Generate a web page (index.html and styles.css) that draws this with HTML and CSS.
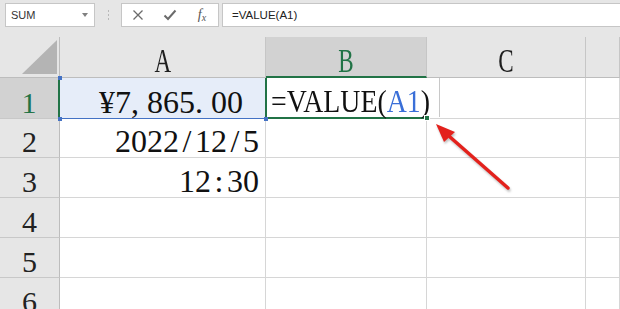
FILE: index.html
```html
<!DOCTYPE html>
<html>
<head>
<meta charset="utf-8">
<title>VALUE</title>
<link rel="stylesheet" href="styles.css">
</head>
<body>
<div class="bar">
	<div class="namebox">SUM<span class="caret"></span></div>
	<div class="grip"><i></i><i></i><i></i></div>
	<div class="fbtns">
		<span class="fb"><svg width="12" height="12" viewBox="0 0 12 12"><path d="M1.5 1.5L10.5 10.5M10.5 1.5L1.5 10.5" stroke="#6b6b6b" stroke-width="1.3" fill="none"/></svg></span>
		<span class="fb"><svg width="14" height="12" viewBox="0 0 14 12"><path d="M1.5 6.5L5 10L12.5 1.5" stroke="#6b6b6b" stroke-width="2" fill="none"/></svg></span>
		<span class="fb fx"><i>f</i><i class="sub">x</i></span>
	</div>
	<div class="finput">=VALUE(A1)</div>
</div>
<div class="sheet">
	<div class="corner"><svg width="59" height="40" viewBox="0 0 59 40"><polygon points="22,37 57,3 57,37" fill="#b4b4b4"/></svg></div>
	<div class="ch"><span>A</span></div>
	<div class="ch sel"><span>B</span></div>
	<div class="ch"><span>C</span></div>
	<div class="ch"></div>

	<div class="rh sel">1</div>
	<div class="c num a1"><span class="dot tl"></span><span class="dot bl"></span><span class="dot br"></span>¥7<span class="pu">,</span>865<span class="pu">.</span>00</div>
	<div class="c b1">
		<div class="edit"><span class="f">=VALUE(<span class="ref">A1</span>)</span></div>
		<span class="handle"></span>
	</div>
	<div class="c"></div>
	<div class="c"></div>

	<div class="rh">2</div>
	<div class="c num">2022<span class="sl">/</span>12<span class="sl">/</span>5</div>
	<div class="c"></div>
	<div class="c"></div>
	<div class="c"></div>

	<div class="rh">3</div>
	<div class="c num">12<span class="sl">:</span>30</div>
	<div class="c"></div>
	<div class="c"></div>
	<div class="c"></div>

	<div class="rh">4</div>
	<div class="c"></div>
	<div class="c"></div>
	<div class="c"></div>
	<div class="c"></div>

	<div class="rh">5</div>
	<div class="c"></div>
	<div class="c"></div>
	<div class="c"></div>
	<div class="c"></div>

	<div class="rh">6</div>
	<div class="c"></div>
	<div class="c"></div>
	<div class="c"></div>
	<div class="c"></div>
</div>
<svg class="arrow" width="620" height="309" viewBox="0 0 620 309">
	<line x1="508" y1="188" x2="450" y2="137" stroke="#e3211c" stroke-width="3.5" stroke-linecap="round"/>
	<polygon points="436,124 455,132 444,142" fill="#e3211c"/>
</svg>
</body>
</html>
```
FILE: styles.css
```css
*{ box-sizing:border-box; }
body{ margin:0; width:620px; height:309px; overflow:hidden; background:#fff; position:relative; }

/* toolbar */
.bar{ height:37px; background:#e6e6e6; display:flex; align-items:flex-start; padding:3px 0 0 5px; font-family:"Liberation Sans", Arial, sans-serif; }
.namebox{ position:relative; width:90px; height:24px; background:#fff; border:1px solid #c6c6c6; padding-left:5px; font-size:11px; line-height:22px; color:#333; }
.caret{ position:absolute; right:6px; top:9px; width:0; height:0; border-left:3px solid transparent; border-right:3px solid transparent; border-top:4px solid #808080; }
.grip{ width:26px; height:24px; display:flex; flex-direction:column; align-items:center; justify-content:center; gap:2px; }
.grip i{ display:block; width:1px; height:2px; background:#b8b8b8; }
.fbtns{ width:98px; height:24px; background:#fff; border:1px solid #c6c6c6; display:flex; }
.fb{ width:32px; height:22px; display:flex; align-items:center; justify-content:center; }
.fx{ font-family:"Liberation Serif", serif; color:#555; font-size:14px; }
.fx .sub{ font-size:10px; position:relative; top:2px; }
.finput{ flex:1; margin-left:3px; margin-right:-4px; height:24px; background:#fff; border:1px solid #c6c6c6; padding-left:9px; font-size:11.5px; line-height:22px; color:#222; }

/* grid */
.sheet{ display:grid; grid-template-columns:60px 206px 161px 159px 34px; grid-template-rows:41px 41px 39px 40px 40px 40px 40px; font-family:"Liberation Serif", "Times New Roman", serif; }
.corner{ background:#e6e6e6; border-right:1px solid #bdbdbd; border-bottom:1px solid #bdbdbd; }
.corner svg{ display:block; }
.ch{ background:#e6e6e6; border-right:1px solid #c6c6c6; border-bottom:1px solid #bdbdbd; display:flex; justify-content:center; align-items:flex-end; font-size:33px; line-height:32px; color:#1e1e1e; }
.ch span{ display:inline-block; transform:scaleX(.7); }
.ch.sel{ background:#d2d2d2; color:#217346; border-bottom:2px solid #217346; line-height:30px; }
.rh{ background:#e6e6e6; border-right:1px solid #bdbdbd; border-bottom:1px solid #c8c8c8; display:flex; justify-content:center; align-items:flex-end; font-size:30px; line-height:30px; color:#222; }
.rh.sel{ background:#d2d2d2; color:#217346; border-right:2px solid #217346; }

.c{ border-right:1px solid #d6d6d6; border-bottom:1px solid #d6d6d6; display:flex; align-items:flex-end; font-size:32px; line-height:32px; color:#111; white-space:nowrap; }
.num{ justify-content:flex-end; padding-right:6px; }
.pu{ display:inline-block; width:16px; text-align:left; }
.sl{ display:inline-block; width:16px; text-align:center; }

.a1{ position:relative; background:#e6edf9; border-right-color:#217346; border-bottom-color:#4472c4; padding-right:22px; }
.dot{ position:absolute; width:4px; height:4px; background:#4472c4; z-index:2; }
.dot.tl{ left:-2px; top:-2px; }
.dot.bl{ left:-2px; bottom:-3px; }
.dot.br{ right:-3px; bottom:-3px; }

.b1{ position:relative; border-left:1px solid #217346; border-right:0; border-bottom:2px solid #217346; }
.edit{ position:absolute; left:0; top:0; width:173px; height:39px; background:#fff; border-right:1px solid #c8c8c8; padding-left:4px; display:flex; align-items:flex-end; z-index:2; }
.f{ display:inline-block; transform:scaleX(.87); transform-origin:left bottom; }
.ref{ color:#3a6fd8; }
.handle{ position:absolute; right:-3px; bottom:-4px; width:6px; height:6px; background:#217346; border:1px solid #fff; z-index:3; }

.arrow{ position:absolute; left:0; top:0; filter:drop-shadow(1px 2px 1px rgba(0,0,0,.25)); }
```
